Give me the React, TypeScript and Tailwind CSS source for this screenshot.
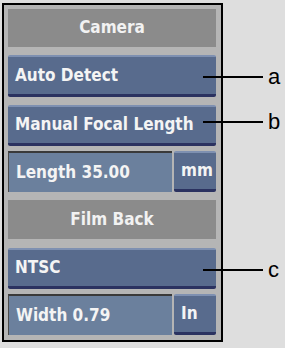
import React from 'react';

const font = { fontFamily: '"Liberation Sans", Arial, sans-serif' };
const uiFont = { fontFamily: '"DejaVu Sans Condensed", "Open Sans", sans-serif' };

const Header = ({ label, className }: { label: string; className: string }) => (
  <div className={`flex items-center justify-center bg-[#8b8b8b] text-[#f2f2f2] text-[17px] font-bold ${className}`} style={uiFont}>
    {label}
  </div>
);

const Button = ({ label, className }: { label: string; className: string }) => (
  <div className={`flex items-center px-[7px] bg-[#586b8d] border-t-2 border-t-[#7e90b1] border-b-[3px] border-b-[#2b3260] rounded-[2px] text-[#f4f4f4] text-[17px] font-bold ${className}`} style={uiFont}>
    {label}
  </div>
);

const Field = ({ label, unit, className }: { label: string; unit: string; className: string }) => (
  <div className={`flex gap-[2px] ${className}`} style={uiFont}>
    <div className="flex-1 flex items-center px-[7px] bg-[#6b809d] border-t-2 border-t-[#3a3a3a] border-l border-l-[#4a4a4a] text-[#f4f4f4] text-[17px] font-bold">
      {label}
    </div>
    <div className="w-[42px] flex items-center px-[7px] bg-[#586b8d] border-t-2 border-t-[#7e90b1] border-b-[3px] border-b-[#2b3260] rounded-[2px] text-[#f4f4f4] text-[17px] font-bold">
      {unit}
    </div>
  </div>
);

const Callout = ({ top, letter }: { top: number; letter: string }) => (
  <div className="absolute left-[203px] flex items-center" style={{ top: top - 13 }}>
    <div className="w-[60px] h-[2px] bg-black" />
    <span className="ml-[5px] text-[22px] leading-[26px] text-black">{letter}</span>
  </div>
);

export default function App() {
  return (
    <div className="relative w-[285px] h-[348px] bg-[#dedede] overflow-hidden" style={font}>
      <div className="ml-[2px] mt-[3px] w-[221px] h-[339px] border-2 border-black bg-[#b5b5b5] pl-[4px] pr-[5px] pt-[4px] flex flex-col">
        <Header label="Camera" className="h-[38px]" />
        <Button label="Auto Detect" className="h-[42px] mt-[8px]" />
        <Button label="Manual Focal Length" className="h-[41px] mt-[8px]" />
        <Field label="Length 35.00" unit="mm" className="h-[41px] mt-[5px]" />
        <Header label="Film Back" className="h-[39px] mt-[8px]" />
        <Button label="NTSC" className="h-[41px] mt-[9px]" />
        <Field label="Width 0.79" unit="In" className="h-[41px] mt-[5px]" />
      </div>
      <Callout top={77} letter="a" />
      <Callout top={122} letter="b" />
      <Callout top={270} letter="c" />
    </div>
  );
}
